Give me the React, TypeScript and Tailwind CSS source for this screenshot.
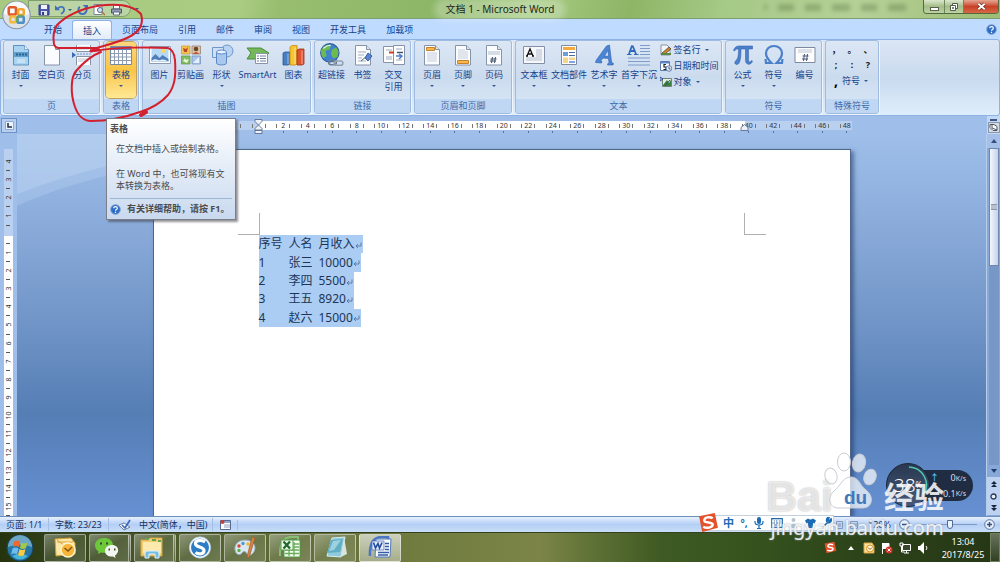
import type { ReactNode } from "react";

const tabs = ["开始", "插入", "页面布局", "引用", "邮件", "审阅", "视图", "开发工具", "加载项"];

const rows = [
  ["序号", "人名", "月收入"],
  ["1", "张三", "10000"],
  ["2", "李四", "5500"],
  ["3", "王五", "8920"],
  ["4", "赵六", "15000"],
];

const hRuler = Array.from({ length: 26 }, (_, i) => i * 2 - 2);
const vRuler = Array.from({ length: 20 }, (_, i) => i - 4);

function Svg({ children, className = "h-[22px] w-[24px]", box = "0 0 24 22" }: { children: ReactNode; className?: string; box?: string }) {
  return (
    <svg className={`shrink-0 ${className}`} viewBox={box} fill="none" aria-hidden="true">
      {children}
    </svg>
  );
}

function Sheet({ children }: { children?: ReactNode }) {
  return (
    <Svg>
      <path d="M4.500 1.500h11l4 4v15.500h-15z" fill="#fbfcfe" stroke="#8794a8" />
      <path d="M15.500 1.500v4h4" fill="#dfe6f0" stroke="#8794a8" />
      {children}
    </Svg>
  );
}

const icons: Record<string, ReactNode> = {
  cover: (
    <Svg>
      <path d="M4.500 1.500h11l4 4v15.500h-15z" fill="#a9d3f0" stroke="#5f93bf" />
      <path d="M15.500 1.500v4h4" fill="#e5f3fc" stroke="#7fa9cc" />
      <path d="M5 8h14v5H5z" fill="#5f9fce" />
      <path d="M7 10.500h2m1 0h2m1 0h2m1 0h2" stroke="#2c628f" strokeWidth="2" />
      <path d="M8 16h8M8 18h8" stroke="#e2f1fa" />
    </Svg>
  ),
  blank: <Sheet />,
  pagebreak: (
    <Svg>
      <path d="M5.500 1v6.500h14V1M5.500 21v-8.500h14V21" fill="#fff" stroke="#8794a8" />
      <path d="M7 3h11M7 5h11M7 15h11M7 17h11" stroke="#b8c3d3" />
      <path d="M1 8l4 3-4 3z" fill="#3c68b4" />
      <path d="M6 10h14" stroke="#6f92c9" strokeDasharray="2 1" />
    </Svg>
  ),
  table: (
    <Svg>
      <path d="M1.500 2.500h21v18h-21z" fill="#fff" stroke="#7588a8" />
      <path d="M2 3h20v3H2z" fill="#5d7fbd" />
      <path d="M2 9.500h20M2 13h20M2 16.500h20M5.500 6v14M9.500 6v14M13.500 6v14M17.500 6v14" stroke="#8f9cb2" />
    </Svg>
  ),
  picture: (
    <Svg>
      <path d="M1.500 2.500h21v17h-21z" fill="#fff" stroke="#8c9bb3" />
      <path d="M3.500 4.500h17v13h-17z" fill="#b5d8f6" />
      <path d="M3.500 14l4-4 4 4 3-3 6 4v2.500h-17z" fill="#507ebc" />
      <path d="M3.500 17c4-4 6 0 9-1s5 0 8 1.500h-17z" fill="#e8f3fc" />
      <circle cx="15.500" cy="7" r="2" fill="#ffd35d" />
    </Svg>
  ),
  clipart: (
    <Svg>
      <path d="M2.500 2h8.500v8H2.500z" fill="#f6c34c" stroke="#c9973c" strokeWidth="0.7" />
      <path d="M4 4l3 1 2-2-1 5-3 0z" fill="#b94a2b" />
      <path d="M13 2h8.500v8H13z" fill="#dac3a8" stroke="#8a7a6a" strokeWidth="0.7" />
      <circle cx="17" cy="5" r="2.300" fill="#6c4527" />
      <path d="M14 10q3-4 6 0z" fill="#c44f2b" />
      <path d="M2.500 12H11v8H2.500z" fill="#80bd62" stroke="#5e964a" strokeWidth="0.7" />
      <path d="M4 17l2-3 1 2 3-1-2 4z" fill="#e8f6dd" />
      <path d="M13 12h8.500v8H13z" fill="#a8c4ea" stroke="#6f8fc0" strokeWidth="0.7" />
      <path d="M14 19l6-6v6z" fill="#e9f0fb" />
    </Svg>
  ),
  shapes: (
    <Svg>
      <circle cx="17" cy="7" r="6" fill="#b9d3f2" stroke="#6e96cb" />
      <path d="M2.500 3.500h11v10h-11z" fill="#cfe0f6" stroke="#6e96cb" />
      <path d="M6.500 8v11c0 2.500 10 2.500 10 0V8z" fill="#a8c8ee" stroke="#5d89c4" />
      <ellipse cx="11.500" cy="8" rx="5" ry="2" fill="#e8f2fd" stroke="#5d89c4" />
    </Svg>
  ),
  smartart: (
    <Svg>
      <path d="M1 4h14l8 5-6 6H1l4-6z" fill="#75b85b" stroke="#4b8b3b" />
      <path d="M9.500 9.500h12v10h-12z" fill="#fff" stroke="#8794a8" />
      <path d="M11 12h2m1 0h6M11 14.500h2m1 0h6M11 17h2m1 0h6" stroke="#6a7f9f" />
    </Svg>
  ),
  chart: (
    <Svg>
      <path d="M1 9l2-1h5v12l-2 1H1z" fill="#477fc0" stroke="#2b5c95" strokeWidth="0.8" />
      <path d="M8 3l2-1.500h5V20l-2 1H8z" fill="#f6c431" stroke="#c68c12" strokeWidth="0.8" />
      <path d="M15 6l2-1h5v15l-2 1h-5z" fill="#dd5332" stroke="#a12d17" strokeWidth="0.8" />
      <path d="M6 9.500V20M13 3.500V20M20 6.500V20" stroke="#ffffff" strokeOpacity="0.5" />
    </Svg>
  ),
  link: (
    <Svg className="h-[24px] w-[26px]" box="0 0 24 22">
      <circle cx="10" cy="9" r="8.500" fill="#3f82cf" stroke="#2a5c9b" />
      <path d="M3 5c2-3 5-4 8-3l-1 4-4 1 1 5-3 2c-2-3-3-6-1-9zM12 6l4-2 2 4-1 5-4 1-2-4z" fill="#6dbb4f" />
      <path d="M4 5q3-3 7-3" stroke="#d6efff" />
      <rect x="9" y="16" width="7" height="4" rx="2" stroke="#6b7b92" strokeWidth="1.500" />
      <rect x="14" y="16.500" width="8" height="4" rx="2" stroke="#93a1b5" strokeWidth="1.500" />
    </Svg>
  ),
  bookmark: (
    <Sheet>
      <path d="M7 8h8M7 11h6M7 14h4M7 17h8" stroke="#a3afc1" />
      <path d="M10 17l6-5" stroke="#4f6079" />
      <path d="M17 9l4 3-4 5-3-3z" fill="#5b86cf" stroke="#3761a9" />
    </Sheet>
  ),
  xref: (
    <Svg>
      <path d="M1.500 2.500h12v16h-12z" fill="#fff" stroke="#8794a8" />
      <path d="M11.500 1.500h11v19h-11z" fill="#fff" stroke="#8794a8" />
      <path d="M4 6h6M4 13h6M4 15h6M14 5h6M14 16h6" stroke="#9ba9bd" />
      <path d="M7 8.500h5" stroke="#d33c27" strokeWidth="2" />
      <path d="M15 8.500h6" stroke="#41516a" strokeWidth="1.500" />
      <path d="M14 12h5m-2-2l3 2-3 3" stroke="#4d7fcd" strokeWidth="1.500" />
    </Svg>
  ),
  header: (
    <Sheet>
      <path d="M6.500 3.500h8v3h-8z" fill="#f7b850" stroke="#c88328" />
      <path d="M7 9h10M7 11h10M7 13h10M7 15h10M7 17h10" stroke="#c6cedb" />
    </Sheet>
  ),
  footer: (
    <Sheet>
      <path d="M6.500 16.500h11v3h-11z" fill="#f7b850" stroke="#c88328" />
      <path d="M7 6h7M7 8h10M7 10h10M7 12h10M7 14h10" stroke="#c6cedb" />
    </Sheet>
  ),
  pageno: (
    <Sheet>
      <path d="M6 7h12v4H6z" fill="#d7dde7" />
      <path d="M10.500 13l-1 6m4-6l-1 6m-4-4h6m-6.500 2h6" stroke="#3f4f69" />
    </Sheet>
  ),
  textbox: (
    <Svg>
      <path d="M1.500 2.500h21v17h-21z" fill="#f5f7fb" stroke="#8390a6" />
      <path d="M14 5h6v12H4v-4h10z" fill="#d5dbe5" />
      <path d="M5 12L8 5l3 7M6 10h4M4 12h2m4 0h2" stroke="#111" strokeWidth="1.300" />
    </Svg>
  ),
  parts: (
    <Svg>
      <path d="M4.500 1.500h15v19h-15z" fill="#fff" stroke="#7d8ba2" />
      <path d="M6 3h12v3H6z" fill="#f5aa3d" />
      <path d="M6 8h5v4H6z" fill="#6e9ddb" />
      <path d="M12 8.500h6m-6 3h6" stroke="#4b6da5" />
      <path d="M6 13.500h5V19H6zM12 13.500h6V16h-6z" fill="#f7d48b" />
      <path d="M12 18h6" stroke="#7ea6dc" strokeWidth="2" />
    </Svg>
  ),
  wordart: (
    <Svg>
      <path
        d="M4 16.500L14.500 2l3-1 2 17 2 1.500-.500 1.500h-5.500l.500-1.500 1-1-.500-4-5.500-.500-2.500 3 1.500.500-.500 1.500-6-.500.500-1.500zM12.500 12l4 .300-.500-6z"
        fill="#4b86d6"
        fillRule="evenodd"
        stroke="#2b5ba8"
        strokeWidth="0.600"
      />
    </Svg>
  ),
  dropcap: (
    <Svg>
      <path d="M5 1.500L2 10M5.500 1.500L9 10M3.500 7h4.500" stroke="#2f69bb" strokeWidth="1.800" />
      <path d="M0 10.500h4.500M7 10.500h4.500" stroke="#2f69bb" />
      <path d="M13 1.500h10M13 4.500h10M13 7.500h10M13 10.500h10M1 14h22M1 17.500h22M1 21h22" stroke="#7e9ccb" />
    </Svg>
  ),
  pi: (
    <Svg>
      <path
        d="M2.500 6.500C3.500 3.500 5 2 8 2h13.500v3h-4v11c0 2.500 2 2.500 3 .500l1 .500c-1.500 5-7 4-7-.500V5h-4.500C10 12 9.500 20.500 6 20.500c-3 0-2.500-3-.500-4.500C7.500 14 7.500 9.500 7.500 5 5.500 5 4.500 5.300 3.500 7z"
        fill="#4b80cc"
        stroke="#2b5ba5"
        strokeWidth="0.500"
      />
    </Svg>
  ),
  omega: (
    <Svg>
      <path d="M3.500 15l.500 4h5.500C5.500 15 4 12 4 9.500 4 5 7.500 2 12 2s8 3 8 7.500c0 2.500-1.500 5.500-5.500 9.500H20l.500-4" stroke="#4a7fca" strokeWidth="2.200" />
    </Svg>
  ),
  number: (
    <Svg>
      <path d="M2 3.500h20v15H2z" fill="#fdfdfe" stroke="#7c8aa1" />
      <path d="M5 5h14v4H5z" fill="#dde1e9" />
      <path d="M11.500 10l-1 7m4-7l-1 7m-4-5h6m-6.500 3h6" stroke="#46597a" />
    </Svg>
  ),
};

function Caret() {
  return <span className="block h-0 w-0 border-x-2 border-t-2 border-x-transparent border-t-[#36598f]" />;
}

type Tool = { label: string; icon: string; caret?: boolean; second?: string; wide?: boolean };

function BigButton({ tool, width = "w-[31px]", active }: { tool: Tool; width?: string; active?: boolean }) {
  return (
    <button
      className={`flex h-[56px] shrink-0 flex-col items-center justify-start rounded-sm pt-[1px] ${tool.wide ? "w-[41px]" : width} ${
        active ? "bg-linear-to-b from-[#fbd67f] via-[#f8c544] to-[#ffe894] ring-1 ring-[#c2a15a]" : ""
      }`}
    >
      <span className="flex h-[24px] shrink-0 items-center">{icons[tool.icon]}</span>
      <span className="mt-[2px] h-[12px] shrink-0 leading-[12px] whitespace-nowrap">{tool.label}</span>
      {tool.second && <span className="leading-[12px]">{tool.second}</span>}
      {tool.caret && (
        <span className="mt-1 shrink-0">
          <Caret />
        </span>
      )}
    </button>
  );
}

function Group({ title, className, children }: { title: string; className: string; children: ReactNode }) {
  return (
    <section
      aria-label={title}
      className={`flex shrink-0 flex-col overflow-hidden rounded-[3px] border border-[#9fbbdf] bg-linear-to-b from-[#dce7f5] via-[#cbdbee] to-[#dbe9f8] shadow-[1px_1px_0_#eef5fd] ${className}`}
    >
      <div className="flex min-h-0 flex-1 justify-center pt-px">{children}</div>
      <h2 className="h-[14px] shrink-0 bg-[#bfd7f2] text-center leading-[13px] text-[#3e6aaa]">{title}</h2>
    </section>
  );
}

function HelpIcon({ className }: { className: string }) {
  return (
    <Svg className={className} box="0 0 12 12">
      <circle cx="6" cy="6" r="5.300" fill="#2f6cc4" stroke="#84a5d4" />
      <path d="M4 4.500C4 2.300 8 2.300 8 4.500 8 6 6 5.800 6 7.300M6 8.500v1.200" stroke="#fff" strokeWidth="1.300" />
    </Svg>
  );
}

function TitleBar() {
  return (
    <header className="relative flex h-[19px] shrink-0 items-start border-b border-[#7f9f72] bg-[linear-gradient(105deg,#a7ca80_0%,#a9cc82_24%,#98bd6e_28%,#8cb666_45%,#a6cb82_53%,#8eb566_63%,#a5c986_72%,#b5d097_86%,#9dbd74_100%)]">
      <div className="ml-[28px] flex h-[17px] w-[103px] items-center gap-[5px] rounded-r-full border border-[#7f9f72] bg-[#c4d9b5]/70 pt-[2px] pl-[9px]">
        <button aria-label="保存">
          <Svg className="h-[12px] w-[12px]" box="0 0 12 12">
            <path d="M1 1h10v10H1z" fill="#4b5ab0" stroke="#303b84" />
            <path d="M3 1h6v4H3z" fill="#f2f4fb" />
            <path d="M3 7h6v4H3z" fill="#dfe3ee" />
            <path d="M4 8h2v3H4z" fill="#303b84" />
          </Svg>
        </button>
        <button aria-label="撤消" className="flex items-center gap-[3px]">
          <Svg className="h-[11px] w-[10px]" box="0 0 12 12">
            <path d="M3 5c4-4 8-2 8 1 0 2-1 4-4 5" stroke="#3c6fbc" strokeWidth="2" />
            <path d="M0 1v6h6z" fill="#3c6fbc" />
          </Svg>
          <Caret />
        </button>
        <button aria-label="重复">
          <Svg className="h-[11px] w-[11px]" box="0 0 12 12">
            <path d="M3 3C0 6 2 11 6 11s6-5 3-8" stroke="#3c6fbc" strokeWidth="2" />
            <path d="M6 1h6v5z" fill="#3c6fbc" />
          </Svg>
        </button>
        <button aria-label="打印预览">
          <Svg className="h-[12px] w-[12px]" box="0 0 12 12">
            <path d="M1 .500h8v10H1z" fill="#fff" stroke="#77849a" />
            <circle cx="7" cy="6" r="2.500" fill="#cfe4f7" stroke="#556480" />
            <path d="M9 8l3 3" stroke="#b27432" strokeWidth="1.500" />
          </Svg>
        </button>
        <button aria-label="快速打印">
          <Svg className="h-[12px] w-[13px]" box="0 0 12 12">
            <path d="M3 1h6v4H3z" fill="#fff" stroke="#5d6880" />
            <path d="M1 5h10v4H1z" fill="#8e99ac" stroke="#4d586f" />
            <path d="M3 8h6v3H3z" fill="#fff" stroke="#5d6880" />
          </Svg>
        </button>
      </div>
      <button aria-label="自定义快速访问工具栏" className="mt-[8px] ml-1">
        <Caret />
      </button>
      <h1 className="absolute inset-x-0 top-[2px] mx-auto w-fit rounded-full bg-white/25 px-2 text-[10px] leading-[15px] text-[#1d261c] shadow-[0_0_6px_4px_rgba(255,255,255,0.25)]">
        文档 1 - Microsoft Word
      </h1>
      <div className="mr-px ml-auto flex h-[14px] w-[76px] overflow-hidden rounded-b-[4px] border border-t-0 border-[#53683f]">
        <button aria-label="最小化" className="flex flex-1 items-center justify-center border-r border-[#6e8459] bg-linear-to-b from-[#dce8ce] via-[#a4bd88] to-[#bcd2a3]">
          <span className="mt-1 h-[4px] w-[9px] border border-[#59614f] bg-white" />
        </button>
        <button aria-label="还原" className="flex w-[19px] items-center justify-center border-r border-[#6e8459] bg-linear-to-b from-[#dce8ce] via-[#a4bd88] to-[#bcd2a3]">
          <Svg className="h-[10px] w-[10px]" box="0 0 10 10">
            <path d="M3.500 1.500h5v5h-5z" fill="#fff" stroke="#525a4a" />
            <path d="M1.500 3.500h5v5h-5z" fill="#fff" stroke="#525a4a" />
            <path d="M3.500 5.500h1v1h-1z" stroke="#525a4a" />
          </Svg>
        </button>
        <button aria-label="关闭" className="flex w-[34px] items-center justify-center bg-linear-to-b from-[#e4a794] via-[#c84127] to-[#d66846]">
          <Svg className="h-[9px] w-[9px]" box="0 0 10 10">
            <path d="M1.500 2l7 6m0-6l-7 6" stroke="#6a2a20" strokeWidth="3.500" />
            <path d="M1.500 2l7 6m0-6l-7 6" stroke="#fff" strokeWidth="2" />
          </Svg>
        </button>
      </div>
      {/* glass ghost of the window behind */}
      <div className="pointer-events-none absolute top-[4px] right-[94px] flex gap-[11px] opacity-30 blur-[2px]" aria-hidden="true">
        <span className="h-[6px] w-[3px] bg-[#46602f]" />
        <span className="h-[7px] w-[16px] bg-[#46602f]" />
        <span className="h-[7px] w-[16px] bg-[#46602f]" />
        <span className="h-[7px] w-[18px] bg-[#46602f]" />
        <span className="h-[7px] w-[16px] bg-[#46602f]" />
        <span className="h-[7px] w-[18px] bg-[#46602f]" />
      </div>
      <button aria-label="Office 按钮" className="absolute top-0 left-[2px] z-20">
        <Svg className="h-[30px] w-[29px]" box="0 0 28 28">
          <circle cx="14" cy="14" r="13.300" fill="#dde2e9" stroke="#8593a8" />
          <path d="M2 13a12 12 0 0124 0q-12 5-24 0" fill="#fff" fillOpacity="0.800" />
          <g strokeWidth="2.500">
            <rect x="6.500" y="6.500" width="7" height="7" rx="1.500" stroke="#e2592a" />
            <rect x="15.500" y="8.500" width="5.500" height="5.500" rx="1.500" stroke="#f0a62f" />
            <rect x="8" y="15.500" width="5.500" height="5.500" rx="1.500" stroke="#f5b839" />
            <rect x="15" y="15.500" width="6" height="6" rx="1.500" stroke="#4e91c8" />
          </g>
          <path d="M14.500 16v5M16 14.800h4" stroke="#6aab4b" strokeWidth="2" />
        </Svg>
      </button>
    </header>
  );
}

function Ribbon() {
  return (
    <div className="shrink-0 bg-[#bfdbff] text-[9px] text-[#15428b]">
      <nav className="flex h-[20px] items-end pr-[2px] pl-[34px]">
        {tabs.map((tab) => (
          <button
            key={tab}
            className={`h-[19px] rounded-t-[3px] px-[10px] ${
              tab === "插入" ? "border border-b-0 border-[#8db2e3] bg-linear-to-b from-white to-[#e2ecf8] px-[9px] leading-[17px]" : "leading-[19px]"
            }`}
          >
            {tab}
          </button>
        ))}
        <button aria-label="帮助" className="mr-[1px] mb-1 ml-auto">
          <HelpIcon className="h-[11px] w-[11px]" />
        </button>
      </nav>
      <div className="flex h-[77px] gap-[3px] rounded-[3px] border border-[#8db2e3] bg-linear-to-b from-[#dbe6f4] via-[#c9daef] to-[#dfeefb] pr-[2px] pb-px pl-[2px]">
        <Group title="页" className="w-[97px]">
          <BigButton tool={{ label: "封面", icon: "cover", caret: true }} />
          <BigButton tool={{ label: "空白页", icon: "blank" }} />
          <BigButton tool={{ label: "分页", icon: "pagebreak" }} />
        </Group>
        <Group title="表格" className="w-[36px]">
          <BigButton active tool={{ label: "表格", icon: "table", caret: true }} width="w-[30px]" />
        </Group>
        <Group title="插图" className="w-[169px]">
          <BigButton tool={{ label: "图片", icon: "picture" }} />
          <BigButton tool={{ label: "剪贴画", icon: "clipart" }} />
          <BigButton tool={{ label: "形状", icon: "shapes", caret: true }} />
          <BigButton tool={{ label: "SmartArt", icon: "smartart", wide: true }} />
          <BigButton tool={{ label: "图表", icon: "chart" }} />
        </Group>
        <Group title="链接" className="w-[97px]">
          <BigButton tool={{ label: "超链接", icon: "link" }} />
          <BigButton tool={{ label: "书签", icon: "bookmark" }} />
          <BigButton tool={{ label: "交叉", icon: "xref", second: "引用" }} />
        </Group>
        <Group title="页眉和页脚" className="w-[98px]">
          <BigButton tool={{ label: "页眉", icon: "header", caret: true }} />
          <BigButton tool={{ label: "页脚", icon: "footer", caret: true }} />
          <BigButton tool={{ label: "页码", icon: "pageno", caret: true }} />
        </Group>
        <Group title="文本" className="w-[207px]">
          <BigButton width="w-[35px]" tool={{ label: "文本框", icon: "textbox", caret: true }} />
          <BigButton width="w-[35px]" tool={{ label: "文档部件", icon: "parts", caret: true }} />
          <BigButton width="w-[35px]" tool={{ label: "艺术字", icon: "wordart", caret: true }} />
          <BigButton width="w-[35px]" tool={{ label: "首字下沉", icon: "dropcap", caret: true }} />
          <div className="flex w-[64px] flex-col pl-[3px]">
            <button className="flex h-[16px] items-center gap-[2px] whitespace-nowrap">
              <Svg className="h-[12px] w-[12px]" box="0 0 12 12">
                <path d="M1 1h6l3 3v7H1z" fill="#f4f6fa" stroke="#8593a8" />
                <path d="M2 9l7-6 2 2-6 5z" fill="#c8842c" stroke="#4b4435" strokeWidth="0.700" />
                <path d="M1 10h10" stroke="#5c8a45" strokeWidth="2" />
              </Svg>
              签名行
              <span className="ml-[2px]"><Caret /></span>
            </button>
            <button className="flex h-[16px] items-center gap-[2px] whitespace-nowrap">
              <Svg className="h-[12px] w-[12px]" box="0 0 12 12">
                <path d="M.500 1.500h9v9h-9z" fill="#fff" stroke="#5d7ab0" />
                <path d="M1 2h8v1.500H1z" fill="#5b87cc" />
                <path d="M6 4.500H4V7h2v2.500H3.500" stroke="#222" strokeWidth="1.200" />
                <circle cx="9" cy="8.500" r="2.800" fill="#e7eef9" stroke="#6481b4" />
                <path d="M9 7v2h1.500" stroke="#334" strokeWidth="0.800" />
              </Svg>
              日期和时间
            </button>
            <button className="flex h-[16px] items-center gap-[2px] whitespace-nowrap">
              <Svg className="h-[12px] w-[12px]" box="0 0 12 12">
                <path d="M2.500 2.500h9v8h-9z" fill="#e6efdf" stroke="#72807a" />
                <path d="M3 9l4-5 2 3 2-3v6H3z" fill="#3b8038" />
                <path d="M0 1l3 2-3 2zM5 10l5-6" stroke="#274f8f" />
              </Svg>
              对象
              <span className="ml-[2px]"><Caret /></span>
            </button>
          </div>
        </Group>
        <Group title="符号" className="w-[97px]">
          <BigButton tool={{ label: "公式", icon: "pi", caret: true }} />
          <BigButton tool={{ label: "符号", icon: "omega", caret: true }} />
          <BigButton tool={{ label: "编号", icon: "number" }} />
        </Group>
        <Group title="特殊符号" className="w-[54px]">
          <div className="grid h-[48px] w-[48px] grid-cols-3 grid-rows-[16px_14px_18px] items-center text-center leading-[14px] font-bold text-[#111]">
            {["，", "。", "、", ";", ":", "?"].map((mark) => (
              <button key={mark}>{mark}</button>
            ))}
            <button className="col-span-3 flex h-[16px] items-center gap-[4px] pl-[6px] font-normal whitespace-nowrap text-[#15428b]">
              <span className="text-[14px] leading-[10px] font-bold text-black">,</span>
              符号 <Caret />
            </button>
          </div>
        </Group>
      </div>
    </div>
  );
}

function TopRuler() {
  return (
    <div className="relative flex h-[18px] shrink-0 items-start bg-[#9fbee9]">
      <button aria-label="制表符" className="mt-[2px] ml-px flex h-[15px] w-[16px] items-center justify-center border border-[#6f92c8] bg-[#b7cff0]">
        <Svg className="h-[9px] w-[9px]" box="0 0 9 9">
          <path d="M.500 .500h8v8h-8z" fill="#eef4fc" stroke="#8fa9d0" />
          <path d="M3 2v4h4" stroke="#1d2c4a" strokeWidth="1.500" />
        </Svg>
      </button>
      <div className="relative mt-[5px] ml-[205px] w-[630px] overflow-hidden">
        <div className="flex h-[9px] w-[637px] bg-[linear-gradient(to_right,#b9d0f1_37px,#fff_37px,#fff_523px,#b9d0f1_523px)] text-[7px] leading-[9px] text-[#333]">
          {hRuler.map((n) => (
            <span key={n} className="flex flex-1 items-center justify-between px-[5px]">
              <i className="h-[4px] w-px bg-[#777]" />
              <span className="-mx-1">{n === 0 ? "" : Math.abs(n)}</span>
              <i className="h-[4px] w-px bg-[#777]" />
            </span>
          ))}
        </div>
        <div className="flex h-[4px] w-[637px]">
          {hRuler.map((n) => (
            <span key={n} className="flex flex-1 items-center justify-center">
              <i className="h-[2px] w-px bg-[#5c7198]" />
            </span>
          ))}
        </div>
      </div>
      {/* indent markers sit over the scale */}
      <Svg className="absolute top-[3px] left-[254px] h-[16px] w-[9px]" box="0 0 9 16">
        <path d="M1 .500h7v2L4.500 6 1 2.500zM4.500 6L8 9.500V11H1V9.500zM1 11.500h7v3H1z" fill="#eef2f8" stroke="#5d6f8e" strokeWidth="0.900" />
      </Svg>
      <Svg className="absolute top-[8px] left-[740px] h-[7px] w-[9px]" box="0 0 9 7">
        <path d="M4.500 .500L8 3.500v3H1v-3z" fill="#eef2f8" stroke="#5d6f8e" strokeWidth="0.900" />
      </Svg>
      <div className="ml-auto flex h-full w-[13px] flex-col items-center bg-[#c3d8f3]">
        <span className="mt-[3px] h-[2px] w-[7px] bg-[#3d598c]" />
        <button aria-label="标尺" className="mt-[1px] flex h-[11px] w-[12px] items-center justify-center border border-[#8b97aa] bg-[#d6dce6]">
          <Svg className="h-[9px] w-[9px]" box="0 0 9 9">
            <path d="M1 1.500h4l3 2v4H4l-3-3z" fill="#fff" stroke="#4e5768" />
            <path d="M3 2v3l5 2" stroke="#4e5768" />
          </Svg>
        </button>
      </div>
    </div>
  );
}

function ReturnMark() {
  return (
    <Svg className="mt-[2px] h-[7px] w-[7px]" box="0 0 7 7">
      <path d="M6 .500v3.500H1M3 2L1 4l2 2" stroke="#5674a0" strokeWidth="0.900" />
    </Svg>
  );
}

function Workspace() {
  return (
    <main className="flex min-h-0 flex-1">
      <div className="flex w-[17px] shrink-0 justify-center bg-[#9fbee9] pt-[15px]">
        <div className="-ml-px flex w-[9px] flex-col overflow-hidden bg-[linear-gradient(to_bottom,#b9d0f1_87px,#fff_87px)] pt-[4px] text-[7px] leading-[9px] text-[#333]">
          {vRuler.map((n) => (
            <span key={n} className="flex min-h-0 flex-1 flex-col items-center justify-between">
              <span className="flex h-[17px] items-center">
                <span className="-rotate-90">{n === 0 ? "" : Math.abs(n)}</span>
              </span>
              <i className="h-px w-[4px] shrink-0 bg-[#555]" />
            </span>
          ))}
        </div>
      </div>

      <div className="relative flex min-w-0 flex-1 justify-center bg-[linear-gradient(to_bottom,#9fbfea_0%,#8aabda_24%,#7296c8_48%,#557eb5_73%,#6690d2_100%)]">
        <svg className="absolute top-0 left-0 h-[80px] w-[220px]" viewBox="0 0 220 80" aria-hidden="true">
          <path d="M0 0h220v20Q80 35 0 72z" fill="#b8d2f0" fillOpacity="0.350" />
          <path d="M0 0h220v8Q90 25 0 60z" fill="#c3d9f3" fillOpacity="0.350" />
        </svg>
        <article className="relative mt-[15px] w-[698px] overflow-hidden border border-b-0 border-[#51658a] bg-white pt-[63px] shadow-[3px_2px_4px_rgba(20,45,90,0.5)]">
          <div className="mx-[84px] flex justify-between">
            <span className="h-[22px] w-[22px] border-r border-b border-[#b0b0b0]" />
            <span className="h-[22px] w-[22px] border-b border-l border-[#b0b0b0]" />
          </div>
          <div className="ml-[105px] flex h-[92px] flex-col items-start text-[12px] text-[#1c3557]">
            {rows.map(([id, name, pay]) => (
              <p key={name} className="flex flex-1 items-center bg-[#abcdf3] pr-px">
                <span className="w-[30px]">{id}</span>
                <span className="w-[30px]">{name}</span>
                <span>{pay}</span>
                <ReturnMark />
              </p>
            ))}
          </div>
        </article>
      </div>

      <div className="flex w-[14px] shrink-0 flex-col items-center border-l border-[#b7cdec] bg-[#88a8d8] pb-[1px]">
        <button aria-label="向上滚动" className="flex h-[14px] w-full shrink-0 items-center justify-center bg-[#a4c0e8]">
          <Svg className="h-[4px] w-[6px]" box="0 0 6 4"><path d="M0 4l3-4 3 4z" fill="#35507f" /></Svg>
        </button>
        <div className="flex h-[118px] w-[10px] shrink-0 items-center justify-center border border-[#7086ad] bg-linear-to-r from-[#f3f6fc] to-[#c5d2e9]">
          <span className="h-[6px] w-[6px] border-y border-[#8b97ac] bg-[#b8c0ce]" />
        </div>
        <div className="w-[10px] flex-1 bg-[#7797c6]" />
        <button aria-label="向下滚动" className="flex h-[12px] w-full items-center justify-center">
          <Svg className="h-[4px] w-[6px]" box="0 0 6 4"><path d="M0 0l3 4 3-4z" fill="#1f3d70" /></Svg>
        </button>
        <div className="flex h-[38px] w-full flex-col items-center justify-between bg-[#bcd2f0] py-1">
          <button aria-label="前一页"><Svg className="h-[6px] w-[6px]" box="0 0 6 6"><path d="M0 3l3-3 3 3zM0 6l3-3 3 3z" fill="#18243c" /></Svg></button>
          <button aria-label="选择浏览对象"><Svg className="h-[7px] w-[7px]" box="0 0 7 7"><circle cx="3.500" cy="3.500" r="2.500" fill="#e9eff8" stroke="#2a3a5a" strokeWidth="1.300" /></Svg></button>
          <button aria-label="下一页"><Svg className="h-[6px] w-[6px]" box="0 0 6 6"><path d="M0 0l3 3 3-3zM0 3l3 3 3-3z" fill="#18243c" /></Svg></button>
        </div>
      </div>
    </main>
  );
}

function StatusBar() {
  return (
    <footer className="relative flex h-[16px] shrink-0 items-center border-t border-[#6d8fbf] bg-linear-to-b from-[#e6f0fd] via-[#b4cff6] to-[#c9def8] text-[9px] text-[#15315f]">
      <span className="w-[49px] border-r border-[#a3bfe6] pl-[6px]">页面: 1/1</span>
      <span className="w-[60px] border-r border-[#a3bfe6] pl-[6px]">字数: 23/23</span>
      <button aria-label="校对" className="flex w-[30px] justify-center">
        <Svg className="h-[12px] w-[13px]" box="0 0 13 12">
          <path d="M1 6l5-2 6 4-6 3z" fill="#fff" stroke="#6d7d99" />
          <path d="M4 6l3 3 5-8" stroke="#3b68b8" strokeWidth="1.700" />
        </Svg>
      </button>
      <span className="w-[74px] border-r border-[#a3bfe6]">中文(简体，中国)</span>
      <button aria-label="宏" className="flex w-[25px] justify-center border-r border-[#a3bfe6]">
        <Svg className="h-[10px] w-[11px]" box="0 0 11 10">
          <path d="M.500 .500h10v9H.500z" fill="#fff" stroke="#556a92" />
          <path d="M1 1h9v2H1z" fill="#8ba8d6" />
          <circle cx="2.500" cy="2" r="2" fill="#c9412c" />
          <path d="M4 5h6M4 7h6" stroke="#8fa0bd" />
        </Svg>
      </button>
      <div className="ml-auto flex items-center gap-[7px] pr-[5px]">
        <button aria-label="大纲视图">
          <Svg className="h-[8px] w-[7px]" box="0 0 7 8">
            <path d="M.500 .500h6v7h-6zM2 3h3M2 5h3" stroke="#8497b5" />
          </Svg>
        </button>
        <button aria-label="普通视图" className="mr-[3px]">
          <Svg className="h-[8px] w-[8px]" box="0 0 8 8">
            <path d="M.500 .500h7v7h-7zM1 3h6M1 5h6" stroke="#8497b5" />
          </Svg>
        </button>
        <span className="mr-px">120%</span>
        <button aria-label="缩小">
          <Svg className="h-[11px] w-[11px]" box="0 0 11 11">
            <circle cx="5.500" cy="5.500" r="4.800" fill="#e6effb" stroke="#58719b" />
            <path d="M3 5.500h5" stroke="#334d7d" strokeWidth="1.500" />
          </Svg>
        </button>
        <label className="flex w-[60px] items-center">
          <span className="sr-only">显示比例</span>
          <input
            type="range"
            min="10"
            max="200"
            defaultValue="116"
            className="h-[10px] w-full appearance-none bg-[linear-gradient(to_bottom,transparent_4px,#7d99c5_4px,#7d99c5_5px,transparent_5px)] [&::-webkit-slider-thumb]:h-[9px] [&::-webkit-slider-thumb]:w-[6px] [&::-webkit-slider-thumb]:appearance-none [&::-webkit-slider-thumb]:rounded-b-[3px] [&::-webkit-slider-thumb]:border [&::-webkit-slider-thumb]:border-[#506a96] [&::-webkit-slider-thumb]:bg-[#e9f1fc]"
          />
        </label>
        <button aria-label="放大">
          <Svg className="h-[11px] w-[11px]" box="0 0 11 11">
            <circle cx="5.500" cy="5.500" r="4.800" fill="#e6effb" stroke="#58719b" />
            <path d="M3 5.500h5M5.500 3v5" stroke="#334d7d" strokeWidth="1.500" />
          </Svg>
        </button>
      </div>
    </footer>
  );
}

function SogouLogo({ className }: { className: string }) {
  return (
    <Svg className={className} box="0 0 20 20">
      <path d="M1 4l15-3 3 14-15 4z" fill="#e4512a" />
      <path d="M14 6C11 4 6 5 6 8c0 3 8 1 8 4 0 3-6 4-9 2" stroke="#fff" strokeWidth="2.300" />
    </Svg>
  );
}

function InputBar() {
  return (
    <div className="absolute right-[166px] bottom-[30px] flex h-[19px] w-[136px] items-center text-[#1c6bb5]">
      <div className="absolute inset-x-0 bottom-[1px] ml-[10px] h-[16px] border border-[#c4d0dd] bg-white" />
      <SogouLogo className="relative h-[21px] w-[21px]" />
      <div className="relative ml-[4px] flex flex-1 items-center justify-between pr-[2px]">
        <button className="text-[11px] leading-[14px] font-bold">中</button>
        <button className="text-[10px] leading-[14px] font-bold">°,</button>
        <button aria-label="语音">
          <Svg className="h-[12px] w-[10px]" box="0 0 10 12">
            <rect x="3" y="0" width="4" height="7" rx="2" fill="#1c6bb5" />
            <path d="M1 4v1c0 4 8 4 8 0V4M5 8v3M3 11.500h4" stroke="#1c6bb5" strokeWidth="1.200" />
          </Svg>
        </button>
        <button aria-label="软键盘">
          <Svg className="h-[10px] w-[12px]" box="0 0 12 10">
            <path d="M.700 .700h10.600v8.600H.700z" stroke="#1c6bb5" strokeWidth="1.200" />
            <path d="M2.500 3h1.500m1 0h2m1 0h1.500M2.500 5h1.500m1 0h2m1 0h1.500M3 7h6" stroke="#1c6bb5" />
          </Svg>
        </button>
        <button aria-label="账户">
          <Svg className="h-[12px] w-[9px]" box="0 0 9 12">
            <circle cx="4.500" cy="3" r="2" fill="#b4c4d2" />
            <path d="M1 11c0-6 7-6 7 0z" fill="#b4c4d2" />
          </Svg>
        </button>
        <button aria-label="皮肤">
          <Svg className="h-[10px] w-[11px]" box="0 0 11 10">
            <path d="M3 .500q2.500 2 5 0l3 2-1.500 3-1.500-.700V10H3V4.800l-1.500.700L0 2.500z" fill="#1c6bb5" />
          </Svg>
        </button>
        <button aria-label="工具">
          <Svg className="h-[11px] w-[10px]" box="0 0 10 11">
            <path d="M1 10l5-5M9 2L7 4 6 3l1-2.500C4 .500 4 5 6 5.500S10 4 9 2z" stroke="#1c6bb5" strokeWidth="1.700" />
          </Svg>
        </button>
      </div>
    </div>
  );
}

const taskIcons: { name: string; icon: ReactNode; stacked?: boolean }[] = [
  {
    name: "Outlook",
    icon: (
      <>
        <path d="M2 3l16-1 4 5v11l-19 2z" fill="#fbe6a6" stroke="#d69d32" />
        <path d="M4 6h14M4 4l8 6 9-5" stroke="#dba03c" />
        <circle cx="15" cy="14" r="7" fill="#f5b63a" stroke="#fff3cf" strokeWidth="1.500" />
        <path d="M11.500 12l3.500 3 4-4" stroke="#875213" strokeWidth="1.500" />
      </>
    ),
  },
  {
    name: "微信",
    stacked: true,
    icon: (
      <>
        <path d="M9 2C4 2 0 5 0 9.500c0 2.500 1.500 4.500 3.500 6L3 18l3-1.500c6 1.500 12-2 12-7S14 2 9 2z" fill="#6dc83c" />
        <path d="M17 9c-4 0-7 2.500-7 6s3.500 6 8 5.500l2.500 1.500-.500-2.500c5-3 4-10.500-3-10.500z" fill="#f3f5f1" />
        <path d="M5 7.500h2m4 0h2M13.500 13.500h1.500m4 0h1.500" stroke="#354b29" strokeWidth="1.800" />
      </>
    ),
  },
  {
    name: "资源管理器",
    stacked: true,
    icon: (
      <>
        <path d="M1 4h7l2-2h12v18H1z" fill="#f0cc6f" stroke="#d5a643" />
        <path d="M3 6h18v11H3z" fill="#fbe9ae" />
        <path d="M5 3h4M12 4h4M18 5h3" stroke="#6b9f52" strokeWidth="2" />
        <path d="M5 22v-5q0-2 2-2h10q2 0 2 2v5h-4v-4H9v4z" fill="#75bde3" stroke="#dff3fd" />
      </>
    ),
  },
  {
    name: "搜狗浏览器",
    icon: (
      <>
        <circle cx="12" cy="11.500" r="10.700" fill="#f5f9fd" stroke="#a1c3e5" strokeWidth="0.600" />
        <circle cx="12" cy="11.500" r="9" fill="#2b7cc4" />
        <path d="M17 6C13 3.500 7 4 7.500 8c.500 3.500 8.500 2.500 8.500 6.500 0 3.500-5 4.500-8.500 2" stroke="#fff" strokeWidth="3.200" />
      </>
    ),
  },
  {
    name: "画图",
    icon: (
      <>
        <path d="M12 4C5 4 1 9 2 14c1 6 6 5 7 3s4-2 5 1c2 4 8-1 8-6S18 4 12 4z" fill="#dae8f2" stroke="#91aabc" />
        <circle cx="6" cy="10" r="1.700" fill="#d54731" />
        <circle cx="10" cy="7.500" r="1.700" fill="#4f9bce" />
        <circle cx="6" cy="14.500" r="1.700" fill="#5daf46" />
        <circle cx="15" cy="8" r="1.700" fill="#edb53c" />
        <path d="M19 1l3 1-6 20-2-1z" fill="#d58243" stroke="#9c5a29" strokeWidth="0.700" />
      </>
    ),
  },
  {
    name: "Excel",
    icon: (
      <>
        <path d="M2 20Q1 1 14 1h6v5" stroke="#86bf75" strokeWidth="2" />
        <path d="M6 4h16v17H6z" fill="#f8fcf5" stroke="#519c45" />
        <path d="M7 17.500h14M7 14h14M16 8h5M16 11h5M11 14v6M16 6v14" stroke="#67ae58" strokeWidth="1.300" />
        <path d="M3 4h12v10H3z" fill="#eef7e9" stroke="#59a04e" />
        <path d="M5.500 5.500l6.500 7m0-7l-6.500 7" stroke="#21682c" strokeWidth="2.300" />
      </>
    ),
  },
  {
    name: "记事本",
    icon: (
      <>
        <path d="M9 2l13-1-4 20-14-1z" fill="#90cbdc" stroke="#d8edf3" />
        <path d="M8 4l12-1-3 13-13 1z" fill="#61afc5" />
        <path d="M21 1l3 17-6 3z" fill="#d8e5dd" />
        <path d="M10 5l8-1-7 10-5 1z" fill="#b6e0eb" fillOpacity="0.700" />
      </>
    ),
  },
  {
    name: "Word",
    icon: (
      <>
        <path d="M2 20Q1 1 14 1h6v5" stroke="#4b76c5" strokeWidth="2.500" />
        <path d="M8 3h15l-1 18H7z" fill="#f8fafe" stroke="#5577b5" />
        <path d="M17 7.500h4m-4 3h4m-4 3h4M10 16.500h11M10 19h10" stroke="#355da4" strokeWidth="1.300" />
        <path d="M4 5h12v9H4z" fill="#e3ebfa" stroke="#3f67b3" strokeWidth="0.700" />
        <path d="M5.500 6.500l2 5.500L10 7.500l1.500 4.500 2.500-5.500" stroke="#244d9c" strokeWidth="1.600" />
      </>
    ),
  },
];

function Taskbar() {
  return (
    <div className="flex h-[30px] shrink-0 items-center border-t border-[#32401d] bg-[linear-gradient(to_right,#25340f_0%,#33431a_6%,#47552a_14%,#5f6c38_28%,#717c40_42%,#7c8547_54%,#607236_59%,#3f5a23_66%,#35521e_76%,#2c4319_86%,#263616_100%)]">
      <button aria-label="开始" className="ml-[6px]">
        <Svg className="h-[28px] w-[28px]" box="0 0 28 28">
          <circle cx="14" cy="14" r="13" fill="#2676a6" stroke="#16455f" />
          <path d="M2 13a12 12 0 0124 0q-12-5-24 0" fill="#a6cfe0" fillOpacity="0.550" />
          <path d="M6 22q8 7 16 0-8-4-16 0" fill="#54d2ef" fillOpacity="0.700" />
          <path d="M8 7.500q3-2 6 0l-1 5.500q-3-2-6 0z" fill="#ee6a31" />
          <path d="M15 8.500q3 2 6.500 0l-1.500 5.500q-3 2-6 0z" fill="#a3c947" />
          <path d="M6.500 14.500q3-2 6 0l-1.500 6q-3-2-6 0z" fill="#6bbdf0" />
          <path d="M13.500 15q3 2 6 0l-1.500 6q-3 2-6 0z" fill="#fbca3e" />
        </Svg>
      </button>
      <nav className="ml-[10px] flex gap-[3px]">
        {taskIcons.map((task) => (
          <button
            key={task.name}
            aria-label={task.name}
            className={`flex h-[28px] w-[42px] items-center justify-center rounded-[2px] border border-white/45 ${
              task.name === "Word"
                ? "bg-linear-to-b from-white/65 to-white/40"
                : "bg-linear-to-br from-white/35 via-white/10 to-white/15"
            } ${task.stacked ? "border-r-3 border-double pr-[4px]" : ""}`}
          >
            <Svg className="h-[23px] w-[24px]" box="0 0 24 23">{task.icon}</Svg>
          </button>
        ))}
      </nav>
      <div className="ml-auto flex h-full items-center text-white">
        <SogouLogo className="h-[13px] w-[13px]" />
        <button aria-label="显示隐藏的图标" className="ml-[11px]">
          <Svg className="h-[4px] w-[6px]" box="0 0 6 4"><path d="M0 4l3-4 3 4z" fill="#fff" /></Svg>
        </button>
        <Svg className="ml-[9px] h-[12px] w-[12px]" box="0 0 12 12">
          <path d="M1 1h8l2 3v7H1z" fill="#fae2a0" stroke="#dba340" />
          <circle cx="7" cy="6.500" r="3.500" fill="#fff3ce" stroke="#d99225" />
          <path d="M5 5.500l2 2 2-2" stroke="#8c5d18" />
        </Svg>
        <Svg className="ml-[6px] h-[12px] w-[12px]" box="0 0 12 12">
          <path d="M1.500 1v11M2 1.500h6v5H2" fill="#fff" stroke="#fff" />
          <circle cx="8" cy="8" r="3.500" fill="#d6342a" />
          <path d="M6.500 6.500l3 3m0-3l-3 3" stroke="#fff" />
        </Svg>
        <Svg className="ml-[6px] h-[12px] w-[12px]" box="0 0 12 12">
          <path d="M3.500 2.500h8v6h-8zM7.500 9v2M5 11h5" stroke="#fff" fill="#35482a" />
          <path d="M1 1h3v3H1zM2.500 4v6h3" stroke="#fff" />
        </Svg>
        <Svg className="ml-[7px] h-[12px] w-[11px]" box="0 0 11 12">
          <path d="M0 4h2l4-4v12L2 8H0z" fill="#fff" />
          <path d="M8 4q2 2 0 4" stroke="#fff" />
        </Svg>
        <time className="ml-[11px] w-[46px] text-center text-[9px] leading-[13px] whitespace-nowrap">
          13:04
          <br />
          2017/8/25
        </time>
        <button aria-label="显示桌面" className="ml-[4px] h-full w-[10px] border border-[#71805f] bg-linear-to-b from-white/30 to-white/5" />
      </div>
    </div>
  );
}

function Tooltip() {
  return (
    <div role="tooltip" className="absolute top-[118px] left-[106px] z-20 w-[130px] border border-[#7a7f89] bg-linear-to-b from-white to-[#c9d9ef] px-[3px] pt-[4px] pb-[4px] text-[9px] leading-[12px] text-[#4c4c4c] shadow-[2px_2px_2px_rgba(60,60,70,0.55)]">
      <p className="font-bold">表格</p>
      <div className="px-[6px] pt-[8px] whitespace-nowrap">
        <p>在文档中插入或绘制表格。</p>
        <p className="mt-[13px]">在 Word 中，也可将现有文</p>
        <p>本转换为表格。</p>
      </div>
      <div className="mt-[6px] flex items-center gap-[6px] border-t border-[#9eb6d6] pt-[4px] font-bold whitespace-nowrap">
        <HelpIcon className="h-[11px] w-[11px]" />
        有关详细帮助，请按 F1。
      </div>
    </div>
  );
}

function SpeedBall() {
  return (
    <div className="absolute right-[27px] bottom-[55px] flex h-[44px] w-[87px] items-center text-white">
      <div className="ml-[22px] flex h-[31px] flex-1 flex-col justify-center rounded-r-full bg-[#202c42] pr-[7px] text-[9px] leading-[15px] text-[#d8dee8]">
        <span className="flex justify-between pl-[22px]"><b className="text-[#4cb6e6]">↑</b><span>0<small className="text-[7px]">K/s</small></span></span>
        <span className="flex justify-end">0.1<small className="text-[7px]">K/s</small></span>
      </div>
      <div className="absolute left-0 flex h-[44px] w-[44px] items-center justify-center rounded-full border border-[#1b2638] bg-linear-to-b from-[#2a3850] to-[#47597a]">
        <Svg className="absolute h-[42px] w-[42px]" box="0 0 42 42">
          <path d="M22 3a18 18 0 0115 27" stroke="#4fc9b4" strokeWidth="1.500" />
        </Svg>
        <span className="text-[19px] leading-none font-light">38</span>
        <span className="text-[8px]">%</span>
      </div>
    </div>
  );
}

function Watermark() {
  return (
    <div className="pointer-events-none absolute right-[52px] bottom-[22px] z-30 w-[182px]" aria-hidden="true">
      <div className="relative flex h-[60px] items-end font-bold">
        <span className="font-['Liberation_Sans',sans-serif] text-[43px] leading-[40px] text-white/70 [text-shadow:0_0_2px_#a8a8a8]">Bai</span>
        <Svg className="absolute bottom-[6px] left-[58px] h-[58px] w-[53px]" box="0 0 53 58">
          <g fill="#fff" fillOpacity="0.700" stroke="#c8ccd2" strokeWidth="1">
            <ellipse cx="7" cy="24" rx="6" ry="8" transform="rotate(-15 7 24)" />
            <ellipse cx="20" cy="10" rx="6.500" ry="9" />
            <ellipse cx="35" cy="11" rx="6.500" ry="9" transform="rotate(12 35 11)" />
            <ellipse cx="46" cy="25" rx="6" ry="8" transform="rotate(20 46 25)" />
            <path d="M27 25c8 0 9 9 15 13 9 7 6 18-3 18H14C5 56 3 45 10 39c7-5 8-14 17-14z" />
          </g>
        </Svg>
        <span className="absolute bottom-[7px] left-[78px] font-['Liberation_Sans',sans-serif] text-[19px] leading-[22px] text-[#4377bb]">du</span>
        <span className="mr-1 ml-auto pb-[3px] text-[30px] leading-[32px] text-white/85">经验</span>
      </div>
      <p className="text-center text-[20px] leading-[24px] whitespace-nowrap text-white/85 [text-shadow:0_0_2px_#8c98a8]">jingyan.baidu.com</p>
    </div>
  );
}

export default function App() {
  return (
    <div className="relative flex h-screen min-w-[1000px] flex-col overflow-hidden font-['Noto_Sans','Noto_Sans_CJK_SC',sans-serif]">
      <TitleBar />
      <Ribbon />
      <TopRuler />
      <Workspace />
      <StatusBar />
      <Taskbar />

      <SpeedBall />
      <InputBar />
      <Watermark />

      {/* hand-drawn marker rings */}
      <svg className="pointer-events-none absolute top-0 left-0 z-10 h-[130px] w-[190px]" viewBox="0 0 190 130" fill="none" stroke="#d3202f" strokeWidth="2" strokeLinecap="round" aria-hidden="true">
        <path d="M98 48H59q-4 0-5-4-2-12 3-19 14-14 40-19c20-3 36-1 44 8 3 10-2 18-12 23-12 6-23 8-36 12" />
        <path d="M91 51q6-2 8-1" strokeWidth="3" />
        <path d="M94 51c20-4 55-4 74-3q6 2 7 12c1 16 0 26-7 35-8 9-18 14-28 17-14 5-31 9-49 9-9 0-13-6-16-14-5-14-4-30 1-36 7-8 14-15 25-19" />
        <path d="M141 115l5-3" strokeWidth="4" />
      </svg>
      <Tooltip />
    </div>
  );
}
